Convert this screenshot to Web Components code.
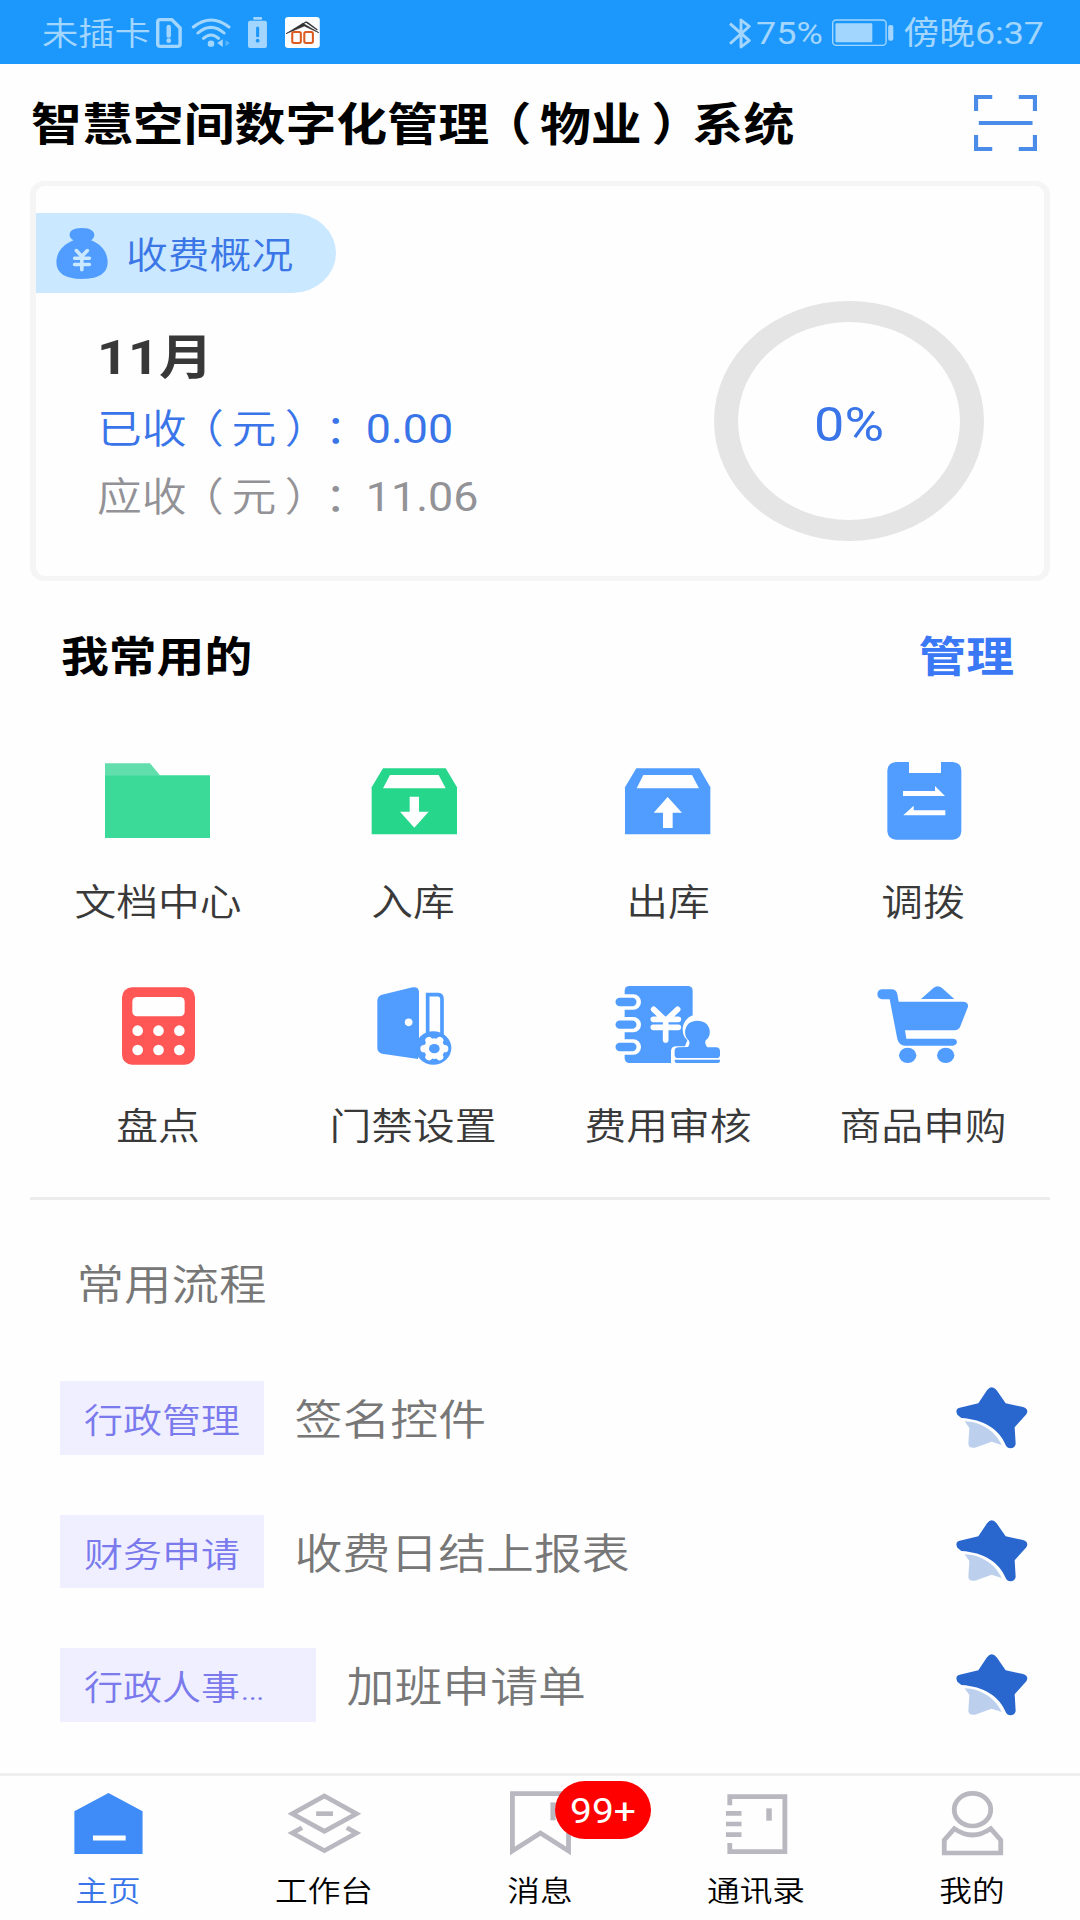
<!DOCTYPE html>
<html lang="zh-CN">
<head>
<meta charset="utf-8">
<title>智慧空间数字化管理（物业）系统</title>
<style>
html,body{margin:0;padding:0;background:#fefefe}
body{width:1080px;height:1920px;overflow:hidden;font-family:Roboto,"Noto Sans CJK SC",sans-serif;text-spacing-trim:space-all}
</style>
</head>
<body>
<home-screen></home-screen>
<script>
const define = (name, html, setup) => customElements.define(name, class extends HTMLElement {
  constructor(){
    super();
    const t = document.createElement('template');
    t.innerHTML = html;
    this.attachShadow({mode:'open'}).appendChild(t.content.cloneNode(true));
  }
  connectedCallback(){ if(setup) setup(this, this.shadowRoot); }
});

/* Icon library: [width, height, viewBox, markup] */
const B = '#509dff', W = '#fefefe', G = '#b9b8c0', S = '#a3d6fe';
const tile = (x, y, m) => [120, 90, `${x + 1.5} ${y} 360 270`, m];
const tab = (x, m) => [80, 74, `${x} 78 232.3 222`, m];
const icons = {
  sim: [26, 30, '453 50 75.5 90', `<path d="M465 55H499L523 80V128Q523 135 515 135H466Q458 135 458 128V62Q458 55 465 55Z" fill="none" stroke="${S}" stroke-width="10"/><path d="M490 77V103" stroke="${S}" stroke-width="13" stroke-linecap="round"/><circle cx="490" cy="118" r="7" fill="${S}"/>`],
  wifi: [40, 31, '555 48 116 93', `<g fill="none" stroke="${S}" stroke-linecap="round" stroke-width="9"><path d="M562 78Q613 36 665 78"/><path d="M575 96Q613 62 651 96"/><path d="M591 112Q613 92 635 112"/></g><circle cx="613" cy="128" r="9.500" fill="${S}"/><path d="M631 126L647 115V138Z" fill="${S}"/><path d="M655 118L668 127L655 136Z" fill="#57b4fd"/>`],
  alert: [19, 31, '720 51 55.200 93', `<rect x="735" y="51" width="26" height="8" rx="3" fill="${S}"/><rect x="720" y="62" width="55" height="82" rx="6" fill="${S}"/><path d="M748 84V107" stroke="#1c97fb" stroke-width="9" stroke-linecap="round"/><circle cx="748" cy="122" r="5.500" fill="#1c97fb"/>`],
  app: [35, 31, '828 51 101.600 93', `<rect x="828" y="51" width="101" height="93" rx="9" fill="#fcfdff"/><path d="M831 101L880 70L926 98L884 78Z" fill="#333" stroke="#333" stroke-width="2"/><path d="M876 74L889 66L915 85M892 67L922 90" fill="none" stroke="#333" stroke-width="3.500"/><g fill="none" stroke="#dc5c20" stroke-width="6"><rect x="849" y="96" width="25" height="33" rx="5"/><rect x="884" y="96" width="25" height="33" rx="5"/></g>`],
  bluetooth: [22, 31, '548 51 64 93', `<path d="M551 68L607 119L583 138V57L607 76L551 128" fill="none" stroke="${S}" stroke-width="8.500" stroke-linejoin="round"/>`],
  battery: [62, 28, '847 56 180 84', `<rect x="849" y="59" width="155" height="76" rx="10" fill="none" stroke="${S}" stroke-width="4"/><rect x="857" y="69" width="107" height="57" rx="3" fill="${S}"/><rect x="1010" y="74" width="15" height="47" rx="6" fill="${S}"/>`],
  scan: [63, 56, '1260 285 183 168', `<g fill="none" stroke="#4b8ce8" stroke-width="12"><path d="M1313 291H1266V333M1390 291H1437V333M1266 405V447H1313M1437 405V447H1390M1274 369H1430"/></g>`],
  money: [54, 53, '160 168 157 160', `<path d="M214 208C197 200 194 171 238 171C281 171 280 199 265 208C293 219 313 243 313 274C313 310 285 325 238 325C190 325 164 308 164 274C164 243 186 219 214 208Z" fill="${B}"/><path d="M222 239L238 257L254 239M238 256V297M217 262H260M217 281H260" fill="none" stroke="#cae8ff" stroke-width="10.500" stroke-linecap="round"/>`],
  folder: tile(172.5, 438, `<path d="M195 460H330L361 497H195Z" fill="#62deac"/><path d="M195 496H510V684H195Z" fill="#3bda98"/>`),
  boxin: tile(937.5, 438, `<path d="M1029 475H1217L1251 532V673H995V532Z" fill="#26d68b"/><path d="M1050 495H1196L1217 535H1029ZM1109 560H1137V605H1166L1123 653L1080 605H1109Z" fill="${W}"/>`),
  boxout: tile(142.5, 438, `<path d="M229 475H418L451 532V673H195V532Z" fill="${B}"/><path d="M250 495H396L417 535H230ZM323 561L366 608H338V654H309V608H281Z" fill="${W}"/>`),
  transfer: tile(907.5, 438, `<path d="M1008 456H1047V489H1143V456H1178Q1204 458 1204 482V664Q1202 689 1178 689H1008Q984 688 982 664V482Q983 458 1008 456Z" fill="${B}"/><path d="M1029 543H1125V528L1155 558H1029ZM1156 616H1030L1061 587V601H1156Z" fill="${W}"/>`),
  calc: tile(172.5, 90, `<rect x="246" y="112" width="219" height="232" rx="30" fill="#ff5755"/><g fill="${W}"><rect x="277" y="141" width="157" height="58" rx="14"/><circle cx="293" cy="242" r="16"/><circle cx="355.500" cy="242" r="16"/><circle cx="418" cy="242" r="16"/><circle cx="293" cy="300" r="16"/><circle cx="355.500" cy="300" r="16"/><circle cx="418" cy="300" r="16"/></g>`),
  door: tile(937.5, 90, `<path d="M1026 134L1118 112Q1136 109 1137 126V262L1134 327L1026 311Q1012 307 1012 294V151Q1013 138 1026 134Z" fill="${B}"/><circle cx="1106" cy="217" r="11.500" fill="${W}"/><path d="M1163 262V134H1195Q1206 135 1206 148V262" fill="none" stroke="${B}" stroke-width="11"/><ellipse cx="1180" cy="294" rx="54" ry="50" fill="${B}"/><circle cx="1183" cy="296" r="31" fill="${W}"/><path d="M1152 296H1214M1167 272L1199 320M1199 272L1167 320" stroke="${W}" stroke-width="22" stroke-linecap="round"/><ellipse cx="1183" cy="296" rx="16" ry="14" fill="${B}"/>`),
  audit: tile(142.5, 90, `<rect x="194" y="108" width="204" height="231" rx="14" fill="${B}"/><g fill="none" stroke="${W}" stroke-width="46" stroke-linecap="round"><path d="M185 156H220M185 224H220M185 291H220"/></g><g fill="none" stroke="${B}" stroke-width="25" stroke-linecap="round"><path d="M179 156H217M179 224H217M179 291H217"/></g><path d="M281 178L317 212L353 178M317 210V270M280 208H355M280 232H355" fill="none" stroke="${W}" stroke-width="17" stroke-linecap="round"/><path d="M333 345V302Q334 289 350 289H375L382 271A45 45 0 1 1 444 271L450 290H485V345Z" fill="${W}"/><path d="M384 291Q392 281 386 271C368 256 371 212 412 212C453 212 459 256 437 271Q433 281 442 292H470Q480 294 480 304V318L475 324H349L344 318V302Q344 293 355 292ZM344 329H480V333Q480 339 473 339H350Q344 339 344 333Z" fill="${B}"/>`),
  cart: tile(907.5, 90, `<path d="M1083 147L1121 113Q1133 104 1145 113L1183 147ZM965 118H994Q1009 118 1012 132L1016 155H1211Q1225 156 1224 170L1201 229Q1197 240 1184 241H1035L1039 266H1178Q1190 266 1191 276Q1190 286 1178 287H1037Q1018 288 1012 267L989 148H966Q953 146 952 133Q953 119 965 118Z" fill="${B}"/><ellipse cx="1043" cy="316" rx="26" ry="23" fill="${B}"/><ellipse cx="1157" cy="316" rx="26" ry="23" fill="${B}"/>`),
  star: [72, 62, '167 81 216 186', `<path d="M260 91Q274 73 289 91L316 130L368 141Q387 147 378 163L343 202L346 252Q343 265 330 265Q321 265 316 255C298 209 250 178 183 174L171 164Q163 147 178 143L234 130Z" fill="#2967cf"/><path d="M193 184C240 185 285 213 304 255L274 245L224 263Q206 266 204 252L207 204Z" fill="#bcd0ee"/>`],
  home: tab(197.5, `<path d="M315 99L414 154V282H216V154Z" fill="#3f8bf8"/><path d="M270 234H365" stroke="${W}" stroke-width="15"/>`),
  work: tab(824.7, `<g fill="none" stroke="${G}" stroke-width="14"><path d="M942 108L1035 161L942 214L849 161Z"/><path d="M877 203L849 219L942 272L1035 219L1007 203"/><path d="M918 161H967"/></g>`),
  msg: tab(1452, `<path d="M1488 101H1651V273L1569.500 219L1488 273Z" fill="none" stroke="${G}" stroke-width="14"/><path d="M1606 127V181" stroke="${G}" stroke-width="15"/>`),
  book: tab(511, `<g fill="none" stroke="${G}" stroke-width="14"><path d="M551 136V110H711V275H551V249"/><path d="M540 160H585M540 192H585M540 224H585"/><path d="M665 145V182" stroke-width="16"/></g>`),
  user: tab(1138.4, `<g fill="none" stroke="${G}" stroke-width="14"><ellipse cx="1256" cy="149" rx="53" ry="49"/><path d="M1203 206L1174 240V279H1338V240L1309 206Q1256 244 1203 206Z"/></g>`)
};
define('ui-icon', `<style>:host{display:block;flex:none}svg{display:block}</style><span></span>`, (el, root) => {
  const [w, h, vb, m] = icons[el.getAttribute('name')];
  root.querySelector('span').innerHTML = `<svg width="${w}" height="${h}" viewBox="${vb}" preserveAspectRatio="none">${m}</svg>`;
});

/* Wide-proportioned label used by every line of text */
define('ui-text', `<style>:host{display:block;white-space:nowrap;line-height:1.2;flex:none}span{display:block;transform:scaleY(.889)}</style><span><slot></slot></span>`);

/* Full-width brackets and colon: half-width glyphs set near the middle of a full cell */
const punct = '.l,.r,.c{font-feature-settings:"halt"}.l{margin:0 .17em 0 .33em}.r{margin:0 .31em 0 .19em}.c{margin:0 .42em 0 .08em}';

define('status-bar', `<style>
:host{display:flex;height:64px;box-sizing:border-box;padding:2px 36px 0 42px;background:#1c98fc;color:#a3d6fe;font-size:36.3px;align-items:center;justify-content:space-between}
div{display:flex;align-items:center}
ui-text{padding-top:1px;font-weight:350}
.sim{margin-left:5.500px}.wifi{margin-left:9px}.alert{margin-left:17px}.app{margin-left:18px}
.pct{margin-left:5.500px;font-size:36px;font-weight:400}.bat{margin-left:9px}.time{margin-left:9.500px;font-size:35.8px;font-weight:400}
</style>
<div><ui-text>未插卡</ui-text><ui-icon class="sim" name="sim"></ui-icon><ui-icon class="wifi" name="wifi"></ui-icon><ui-icon class="alert" name="alert"></ui-icon><ui-icon class="app" name="app"></ui-icon></div>
<div><ui-icon name="bluetooth"></ui-icon><ui-text class="pct">75%</ui-text><ui-icon class="bat" name="battery"></ui-icon><ui-text class="time">傍晚6:37</ui-text></div>`);

define('app-header', `<style>
:host{display:flex;height:117px;box-sizing:border-box;padding:0 43px 0 31px;align-items:center;justify-content:space-between}
ui-text{font-size:50.9px;font-weight:700;color:#000;padding-top:7px}${punct}
</style><ui-text>智慧空间数字化管理<span class="l">（</span>物业<span class="r">）</span>系统</ui-text><ui-icon name="scan"></ui-icon>`);

define('progress-ring', `<style>
:host{display:flex;width:270px;height:240px;box-sizing:border-box;border:solid #e5e5e5;border-width:21.5px 24px;border-radius:50%;align-items:center;justify-content:center;color:#3975e8;font-size:54px}
ui-text{padding-top:8px}
</style><ui-text><slot></slot></ui-text>`);

define('fee-card', `<style>
:host{display:flex;flex-direction:column;height:400px;margin:0 30px;box-sizing:border-box;border:solid #f5f5f5;border-width:5px 6px;border-radius:14px;padding-top:27px}
.tag{display:flex;align-items:center;width:300px;height:80px;box-sizing:border-box;padding-left:19px;background:#cae8ff;border-radius:0 44px 44px 0/0 40px 40px 0;color:#3b76e6;font-size:41.8px;gap:17px}
.tag ui-text{padding-top:9px;font-weight:350}
.body{display:flex;justify-content:space-between;padding:8px 60px 0 61px}
.lines{display:flex;flex-direction:column;padding-top:22px;font-size:44.8px}
.lines ui-text{line-height:67.5px;font-weight:350}
.lines .m{font-size:54px;font-weight:700;color:#383838;line-height:70px;padding-bottom:3px}
.a{color:#3975e8}.b{color:#929297}.n{font-weight:400}${punct}
</style>
<div class="tag"><ui-icon name="money"></ui-icon><ui-text>收费概况</ui-text></div>
<div class="body"><div class="lines"><ui-text class="m">11月</ui-text><ui-text class="a">已收<span class="l">（</span>元<span class="r">）</span><span class="c">：</span><span class="n">0.00</span></ui-text><ui-text class="b">应收<span class="l">（</span>元<span class="r">）</span><span class="c">：</span><span class="n">11.06</span></ui-text></div><progress-ring>0%</progress-ring></div>`);

define('app-tile', `<style>
:host{display:flex;flex-direction:column;align-items:center;height:224px;font-size:41.8px;font-weight:350;color:#393939}
ui-text{line-height:50px;margin-top:32.5px;padding-left:1px}
</style><span></span><ui-text><slot></slot></ui-text>`, (el, root) => {
  root.querySelector('span').innerHTML = `<ui-icon name="${el.getAttribute('icon')}"></ui-icon>`;
});

define('app-grid', `<style>
:host{display:block;margin:0 30px;height:619px;box-sizing:border-box;border-bottom:3px solid #ececec}
header{display:flex;justify-content:space-between;font-size:47.8px;font-weight:700;color:#000;padding:47px 36px 0 31px;height:128px}
header ui-text{line-height:60px}
header .more{color:#3a78f5}
section{display:grid;grid-template-columns:repeat(4,255px)}
</style>
<header><ui-text>我常用的</ui-text><ui-text class="more">管理</ui-text></header>
<section>
<app-tile icon="folder">文档中心</app-tile><app-tile icon="boxin">入库</app-tile><app-tile icon="boxout">出库</app-tile><app-tile icon="transfer">调拨</app-tile>
<app-tile icon="calc">盘点</app-tile><app-tile icon="door">门禁设置</app-tile><app-tile icon="audit">费用审核</app-tile><app-tile icon="cart">商品申购</app-tile>
</section>`);

define('flow-item', `<style>
:host{display:flex;align-items:center;height:73.5px;margin-bottom:60px;padding:0 52px 0 60px;color:#777;font-weight:350}
.tag{display:flex;align-items:center;height:100%;min-width:156px;padding:0 24px;background:#f0efff;color:#7a7aed;font-size:39px}
:host([wide]) .tag{width:208px}
.tag ui-text{padding-top:8px}
.name{flex:1;margin-left:30.5px;font-size:47.9px;padding-top:8px}
</style><div class="tag"><ui-text><slot name="tag"></slot></ui-text></div><ui-text class="name"><slot></slot></ui-text><ui-icon name="star"></ui-icon>`);

define('flow-list', `<style>
:host{display:block;height:573px;box-sizing:border-box;padding-top:56px}
.title{font-size:47.5px;line-height:60px;color:#777;padding-left:76.5px;margin-bottom:65px;font-weight:350}
</style><ui-text class="title">常用流程</ui-text>
<flow-item><span slot="tag">行政管理</span>签名控件</flow-item>
<flow-item><span slot="tag">财务申请</span>收费日结上报表</flow-item>
<flow-item wide><span slot="tag">行政人事…</span>加班申请单</flow-item>`);

define('nav-item', `<style>
:host{display:flex;flex:1;flex-direction:column;align-items:center;padding-top:10px;color:#000;font-size:32.7px}
:host([active]){color:#3975e8}
.i{position:relative}
.badge{position:absolute;left:55px;top:-5px;width:96px;height:58px;border-radius:30px/29px;background:#f00;color:#fff;font-size:39px;display:none;align-items:center;justify-content:center}
:host([badge]) .badge{display:flex}
ui-text{line-height:40px}
.n{padding-top:2px}
.l{margin-top:12px;font-weight:350}
</style><div class="i"><span class="ic"></span><div class="badge"><ui-text class="n"></ui-text></div></div><ui-text class="l"><slot></slot></ui-text>`, (el, root) => {
  root.querySelector('.ic').innerHTML = `<ui-icon name="${el.getAttribute('icon')}"></ui-icon>`;
  root.querySelector('.n').textContent = el.getAttribute('badge') || '';
});

define('nav-bar', `<style>:host{display:flex;height:147px;box-sizing:border-box;border-top:3px solid #efefef}</style>
<nav-item icon="home" active>主页</nav-item><nav-item icon="work">工作台</nav-item><nav-item icon="msg" badge="99+">消息</nav-item><nav-item icon="book">通讯录</nav-item><nav-item icon="user">我的</nav-item>`);

define('home-screen', `<style>:host{display:flex;flex-direction:column;width:1080px;height:1920px}:host>*{flex:none}</style>
<status-bar></status-bar><app-header></app-header><fee-card></fee-card><app-grid></app-grid><flow-list></flow-list><nav-bar></nav-bar>`);
</script>
</body>
</html>
